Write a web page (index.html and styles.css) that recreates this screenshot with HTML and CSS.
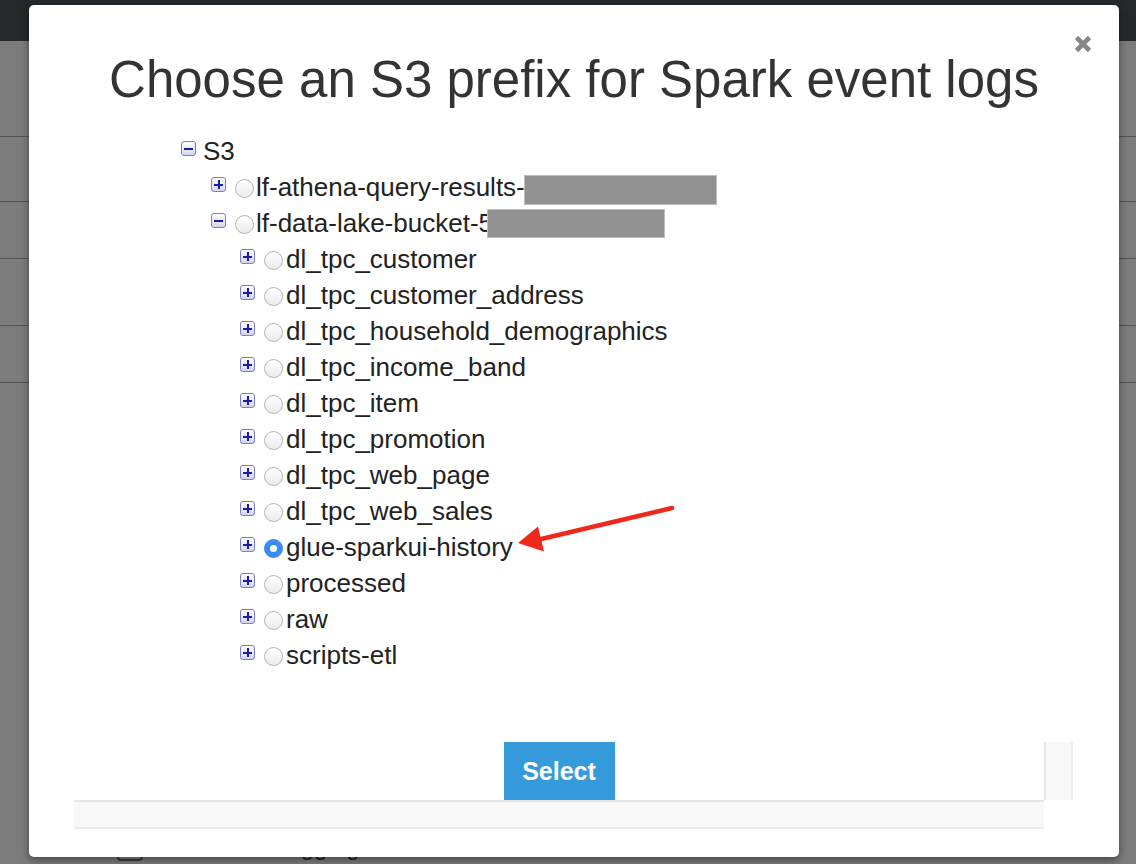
FILE: index.html
```html
<!DOCTYPE html>
<html lang="en">
<head>
<meta charset="utf-8">
<title>Choose an S3 prefix</title>
<link rel="stylesheet" href="styles.css">
</head>
<body>
<div class="page">
  <header class="topbar"></header>
  <div class="bg-rows">
    <div class="bg-row r1"></div>
    <div class="bg-row r2"></div>
    <div class="bg-row r3"></div>
    <div class="bg-row r4"></div>
    <div class="bg-row r5"></div>
    <div class="bg-row r6"></div>
    <div class="bg-row r7"><span class="bg-check"></span><span class="bg-label">Continuous logging</span></div>
  </div>
</div>

<div class="modal">
  <button class="close" aria-label="Close">
    <svg width="20" height="20" viewBox="0 0 20 20"><path d="M3.5 3.5L16.5 16.5M16.5 3.5L3.5 16.5" stroke="#878787" stroke-width="4.6"/></svg>
  </button>
  <h1 class="title">Choose an S3 prefix for Spark event logs</h1>

  <ul class="tree">
    <li class="node lvl0"><span class="toggle minus"></span><span class="label">S3</span></li>
    <li class="node lvl1"><span class="toggle"></span><span class="radio"></span><span class="label">lf-athena-query-results-<span class="redact r-a"></span></span></li>
    <li class="node lvl1"><span class="toggle minus"></span><span class="radio"></span><span class="label">lf-data-lake-bucket-5<span class="redact r-b"></span></span></li>
    <li class="node lvl2"><span class="toggle"></span><span class="radio"></span><span class="label">dl_tpc_customer</span></li>
    <li class="node lvl2"><span class="toggle"></span><span class="radio"></span><span class="label">dl_tpc_customer_address</span></li>
    <li class="node lvl2"><span class="toggle"></span><span class="radio"></span><span class="label">dl_tpc_household_demographics</span></li>
    <li class="node lvl2"><span class="toggle"></span><span class="radio"></span><span class="label">dl_tpc_income_band</span></li>
    <li class="node lvl2"><span class="toggle"></span><span class="radio"></span><span class="label">dl_tpc_item</span></li>
    <li class="node lvl2"><span class="toggle"></span><span class="radio"></span><span class="label">dl_tpc_promotion</span></li>
    <li class="node lvl2"><span class="toggle"></span><span class="radio"></span><span class="label">dl_tpc_web_page</span></li>
    <li class="node lvl2"><span class="toggle"></span><span class="radio"></span><span class="label">dl_tpc_web_sales</span></li>
    <li class="node lvl2"><span class="toggle"></span><span class="radio checked"></span><span class="label">glue-sparkui-history</span></li>
    <li class="node lvl2"><span class="toggle"></span><span class="radio"></span><span class="label">processed</span></li>
    <li class="node lvl2"><span class="toggle"></span><span class="radio"></span><span class="label">raw</span></li>
    <li class="node lvl2"><span class="toggle"></span><span class="radio"></span><span class="label">scripts-etl</span></li>
  </ul>

  <div class="footer">
    <div class="footer-content"><button class="select-btn">Select</button></div>
    <div class="vtrack"></div>
    <div class="htrack"></div>
    <div class="corner"></div>
  </div>

  <svg class="arrow" width="1090" height="852" viewBox="0 0 1090 852">
    <line x1="643" y1="503" x2="508" y2="535" stroke="#f0281c" stroke-width="4.5" stroke-linecap="round"/>
    <polygon points="489,538 509,521.5 515,546.5" fill="#f0281c"/>
  </svg>
</div>
</body>
</html>
```

FILE: styles.css
```css
* { box-sizing: border-box; }

html, body {
  margin: 0;
  padding: 0;
}

body {
  width: 1136px;
  height: 864px;
  overflow: hidden;
  position: relative;
  background: #7b7c7b;
  font-family: "Liberation Sans", Arial, sans-serif;
}

/* background page (dimmed) */
.topbar {
  height: 41px;
  background: #25292b;
}

.bg-row {
  border-bottom: 1px solid #525453;
}
.bg-row.r1 { height: 96px; }
.bg-row.r2 { height: 65px; }
.bg-row.r3 { height: 57px; }
.bg-row.r4 { height: 67px; }
.bg-row.r5 { height: 57px; }
.bg-row.r6 { height: 440px; border-bottom: none; }
.bg-row.r7 {
  height: 40px;
  border-bottom: none;
  display: flex;
  align-items: center;
  padding-left: 117px;
  gap: 11px;
}
.bg-check {
  width: 26px;
  height: 26px;
  margin-top: 10px;
  border: 2px solid #3a3b3b;
  border-radius: 4px;
  background: #858685;
}
.bg-label {
  font-size: 24px;
  line-height: 28px;
  color: #1d1e1e;
  margin-top: 8px;
}

/* modal */
.modal {
  position: absolute;
  left: 29px;
  top: 5px;
  width: 1090px;
  height: 852px;
  background: #fff;
  border-radius: 5px;
  box-shadow: 0 3px 9px rgba(0, 0, 0, 0.45);
}

.close {
  position: absolute;
  top: 29px;
  right: 26px;
  width: 20px;
  height: 20px;
  padding: 0;
  border: none;
  background: none;
  display: block;
}
.close svg { display: block; }

.title {
  margin: 47px 0 0;
  font-size: 51px;
  line-height: 56px;
  font-weight: normal;
  color: #333;
  text-align: center;
}

.tree {
  list-style: none;
  margin: 25px 0 0;
  padding: 0;
}

.node {
  height: 36px;
  display: flex;
  align-items: flex-start;
  font-size: 26px;
  line-height: 36px;
  color: #222;
  white-space: nowrap;
}
.node.lvl0 { padding-left: 152px; }
.node.lvl1 { padding-left: 182px; }
.node.lvl2 { padding-left: 211px; }

.toggle {
  flex: none;
  position: relative;
  width: 15px;
  height: 15px;
  margin-top: 8px;
  margin-right: 9px;
  border: 1px solid #7d7dc6;
  border-radius: 3px;
  background: linear-gradient(#ffffff, #d6d6ec);
}
.toggle::before,
.toggle::after {
  content: "";
  position: absolute;
  background: #1b1bb0;
}
.toggle::before {
  left: 2px;
  right: 2px;
  top: 5.5px;
  height: 2px;
}
.toggle::after {
  top: 2px;
  bottom: 2px;
  left: 5.5px;
  width: 2px;
}
.toggle.minus::after { display: none; }
.lvl0 .toggle { margin-right: 7px; }

.radio {
  flex: none;
  position: relative;
  width: 19px;
  height: 19px;
  margin-top: 10px;
  margin-right: 2px;
  border: 1px solid #b3b3b3;
  border-radius: 50%;
  background: linear-gradient(#ffffff, #ebebeb);
}
.lvl2 .radio { margin-right: 3px; }
.radio.checked {
  border-color: #3a86ee;
  background: #3b8bf4;
}
.radio.checked::after {
  content: "";
  position: absolute;
  left: 5px;
  top: 5px;
  width: 7px;
  height: 7px;
  border-radius: 50%;
  background: #fff;
}

.redact {
  display: inline-block;
  background: #919191;
  border: 1px solid #bdbdbd;
}
.redact.r-a {
  width: 193px;
  height: 30px;
  vertical-align: -9px;
  margin-left: -1px;
}
.redact.r-b {
  width: 178px;
  height: 29px;
  vertical-align: -6px;
  margin-left: -6px;
}

/* footer with scroll tracks */
.footer {
  margin: 69px 0 0 45px;
  width: 999px;
  display: grid;
  grid-template-columns: 970px 29px;
  grid-template-rows: 58px 29px;
}
.footer-content {
  display: flex;
  justify-content: center;
}
.select-btn {
  width: 111px;
  height: 58px;
  padding: 0;
  border: none;
  background: #359ad9;
  color: #fff;
  font-family: "Liberation Sans", Arial, sans-serif;
  font-weight: bold;
  font-size: 25px;
  line-height: 58px;
}
.vtrack {
  background: #f8f8f8;
  border-left: 2px solid #e6e6e6;
  border-right: 2px solid #ececec;
}
.htrack {
  background: #f8f8f8;
  border-top: 2px solid #e6e6e6;
  border-bottom: 2px solid #ebebeb;
}
.corner { background: #fff; }

.arrow {
  position: absolute;
  left: 0;
  top: 0;
  pointer-events: none;
}
```
